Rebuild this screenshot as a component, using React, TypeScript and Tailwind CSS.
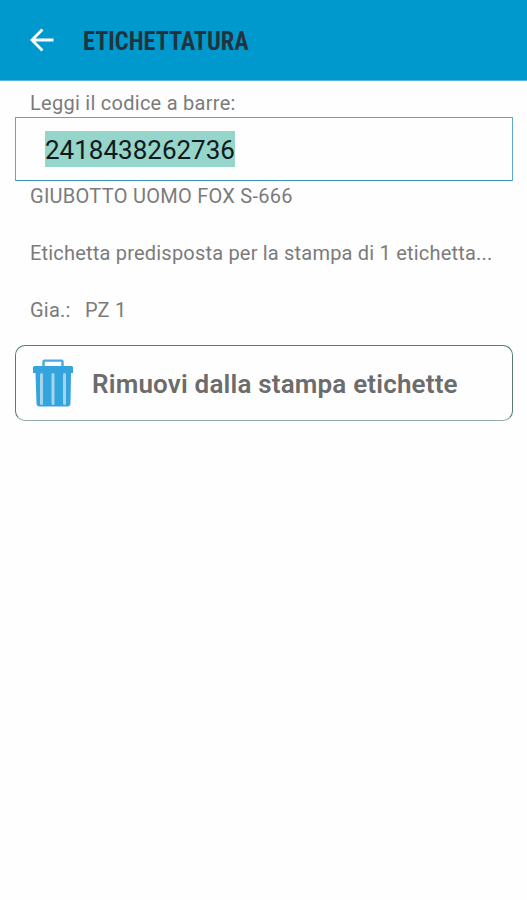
import React from "react";

function BackArrow() {
  return (
    <svg className="ml-[29px] h-6 w-[26px] shrink-0" viewBox="0 0 26 24" fill="none" stroke="#fff" strokeWidth="2.8">
      <path d="M13.4 1.600 3 12l10.400 10.400M3 12h21.500" />
    </svg>
  );
}

function TrashIcon() {
  return (
    <svg className="ml-4 h-[48px] w-[42px] shrink-0" viewBox="0 0 42 48">
      <path d="M11.500 8V2.600q0-1 1-1h17q1 0 1 1V8" fill="none" stroke="#48abdf" strokeWidth="2.4" />
      <path d="M2.500 7h37q1.500 0 1.500 1.500V14H39L38.500 44.500q-.2 3-3 3H7.500q-2.800 0-3-3L3.500 14H1V8.500Q1 7 2.500 7Z" fill="#34a4dc" />
      <path d="M9.500 15.500v29M21 15.500v29M32.500 15.500v29" stroke="#a3d4f0" strokeWidth="3" strokeLinecap="round" />
    </svg>
  );
}

export default function App() {
  return (
    <main className="min-h-[900px] w-full bg-[#fefefe] font-['Roboto',sans-serif] text-[20px] leading-6 text-[#7b7b7b]">
      <header className="flex h-[81px] items-center border-b border-[#59b6da] bg-[#0099ce]">
        <BackArrow />
        <h1 className="ml-7 mt-1 origin-left scale-x-[0.97] whitespace-nowrap font-['Roboto_Condensed','Roboto',sans-serif] text-[25px] font-bold leading-7 text-[#21343e]">
          ETICHETTATURA
        </h1>
      </header>
      <section className="flex flex-col px-[15px] pt-[10px]">
        <label className="ml-[15px] whitespace-nowrap tracking-[0.27px]">
          <span>Leggi il codice a barre:</span>
        </label>
        <div className="mt-0.5 flex h-[64px] w-[498px] items-center rounded-[1px] border border-[#5aa9cd] border-b-[#3c93b4] pl-[29px]">
          <span className="h-[36px] bg-[#95d5ca] text-[26px] leading-[38px] text-[#10191b]">2418438262736</span>
        </div>
        <p className="ml-[15px] mt-[3px] whitespace-nowrap tracking-[0.27px]">
          <span>GIUBOTTO UOMO FOX S-666</span>
        </p>
        <p className="ml-[15px] mt-[33px] whitespace-nowrap tracking-[0.2px]">
          <span>Etichetta predisposta per la stampa di 1 etichetta...</span>
        </p>
        <p className="ml-[15px] mt-[33px] flex whitespace-nowrap tracking-[0.2px]">
          <span className="w-[55px]">Gia.:</span>
          <span>PZ 1</span>
        </p>
        <button className="mt-[23px] flex h-[76px] w-[498px] items-center rounded-[10px] border-[1.5px] border-[#587b6b] border-b-[#91aea0]">
          <TrashIcon />
          <span className="ml-[18px] mt-0.5 whitespace-nowrap text-[26px] font-semibold leading-8 tracking-[0.18px] text-[#6c6c6c]">
            Rimuovi dalla stampa etichette
          </span>
        </button>
      </section>
    </main>
  );
}
